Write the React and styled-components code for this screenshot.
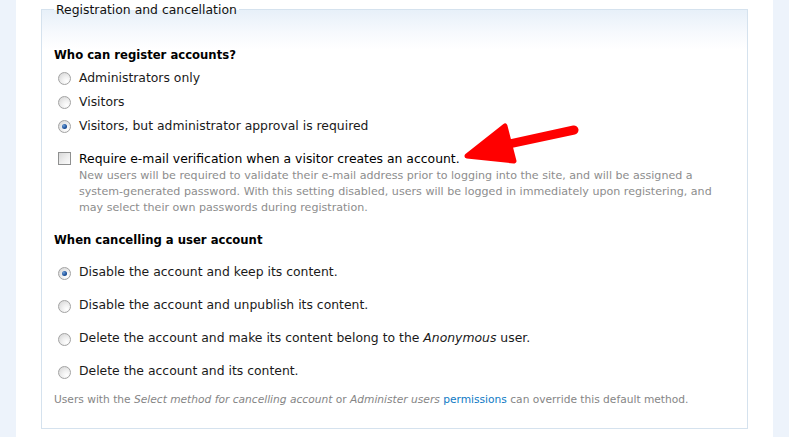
import React from "react";
import styled, { createGlobalStyle } from "styled-components";

const Global = createGlobalStyle`
  html, body { margin: 0; padding: 0; background: #fff; }
  body { font-family: "DejaVu Sans", Verdana, sans-serif; }
`;

const Page = styled.div`
  position: relative;
  display: flex;
  width: 789px;
  height: 437px;
  overflow: hidden;
`;

const Strip = styled.div`
  width: 16px;
  flex: none;
  background: #edf3fb;
`;

const Main = styled.div`
  flex: 1;
  padding: 0 25px;
  background: #fff;
`;

const Fieldset = styled.fieldset`
  margin: 0;
  padding: 28px 12px 20px 12px;
  border: 1px solid #d5e2ee;
  background: linear-gradient(to bottom, #e7f0f9 0px, #f6f9fd 22px, #ffffff 40px);
  min-width: 0;
`;

const Legend = styled.legend`
  padding: 2px 2px 0 2px;
  font-size: 12.4px;
  line-height: 16px;
  color: #111;
`;

const Heading = styled.div`
  font-weight: bold;
  font-size: 11.65px;
  line-height: 18px;
  color: #000;
  margin-top: ${(p) => p.$mt || 0}px;
`;

const List = styled.div`
  display: flex;
  flex-direction: column;
  margin-top: ${(p) => p.$mt || 0}px;
`;

const Option = styled.label`
  display: flex;
  align-items: center;
  height: ${(p) => p.$h}px;
  padding-left: 4px;
  font-size: 12.4px;
  color: #1a1a1a;
  white-space: nowrap;
`;

const Text = styled.span`
  margin-left: 2px;
  em { font-style: italic; }
`;

const RadioDot = styled.span`
  position: relative;
  box-sizing: border-box;
  width: 13px;
  height: 13px;
  margin-top: 3px;
  margin-right: 6px;
  border-radius: 50%;
  border: 1px solid #a3a3a3;
  background: radial-gradient(circle at 70% 75%, #ffffff 0%, #f0f0f0 40%, #d2d2d2 100%);
  flex: none;
  &::after {
    content: "";
    display: ${(p) => (p.$checked ? "block" : "none")};
    position: absolute;
    left: 3px;
    top: 3px;
    width: 5px;
    height: 5px;
    border-radius: 50%;
    background: radial-gradient(circle at 35% 35%, #6f9fd6 0%, #1f55a0 55%, #0d2f66 100%);
  }
`;

const Box = styled.span`
  box-sizing: border-box;
  width: 13px;
  height: 13px;
  margin-right: 6px;
  border: 1px solid #8f9090;
  background: linear-gradient(135deg, #d8d8d8 0%, #eeeeee 55%, #fbfbfb 100%);
  flex: none;
`;

const CheckRow = styled(Option)`
  margin-top: 12px;
  color: #000;
`;

const Desc = styled.div`
  margin: 1px 0 0 25px;
  font-size: 11.1px;
  line-height: 16px;
  color: #8d8d8d;
  white-space: nowrap;
`;

const Footer = styled.div`
  margin-top: 5px;
  font-size: 10.65px;
  line-height: 16px;
  color: #858585;
  white-space: nowrap;
  em { font-style: italic; }
  a { color: #0d79c4; text-decoration: none; }
`;

const Arrow = styled.svg`
  position: absolute;
  left: 0;
  top: 0;
  pointer-events: none;
`;

export default function App() {
  return (
    <>
      <Global />
      <Page>
        <Strip />
        <Main>
          <Fieldset>
            <Legend>Registration and cancellation</Legend>
            <Heading>Who can register accounts?</Heading>
            <List $mt={1}>
              <Option $h={24}><RadioDot /><Text>Administrators only</Text></Option>
              <Option $h={24}><RadioDot /><Text>Visitors</Text></Option>
              <Option $h={24}><RadioDot $checked /><Text>Visitors, but administrator approval is required</Text></Option>
            </List>
            <CheckRow $h={18}><Box /><Text>Require e-mail verification when a visitor creates an account.</Text></CheckRow>
            <Desc>
              New users will be required to validate their e-mail address prior to logging into the site, and will be assigned a
              <br />
              system-generated password. With this setting disabled, users will be logged in immediately upon registering, and
              <br />
              may select their own passwords during registration.
            </Desc>
            <Heading $mt={15}>When cancelling a user account</Heading>
            <List $mt={6}>
              <Option $h={33}><RadioDot $checked /><Text>Disable the account and keep its content.</Text></Option>
              <Option $h={33}><RadioDot /><Text>Disable the account and unpublish its content.</Text></Option>
              <Option $h={33}><RadioDot /><Text>Delete the account and make its content belong to the <em>Anonymous</em> user.</Text></Option>
              <Option $h={33}><RadioDot /><Text>Delete the account and its content.</Text></Option>
            </List>
            <Footer>
              Users with the <em>Select method for cancelling account</em> or <em>Administer users</em>{" "}
              <a href="#">permissions</a> can override this default method.
            </Footer>
          </Fieldset>
        </Main>
        <Strip />
        <Arrow width="789" height="437" viewBox="0 0 789 437">
          <line x1="574" y1="130" x2="500" y2="146" stroke="#ff0000" strokeWidth="9" strokeLinecap="round" />
          <polygon points="467,156 505,126 514,161" fill="#ff0000" stroke="#ff0000" strokeWidth="5" strokeLinejoin="round" />
        </Arrow>
      </Page>
    </>
  );
}
